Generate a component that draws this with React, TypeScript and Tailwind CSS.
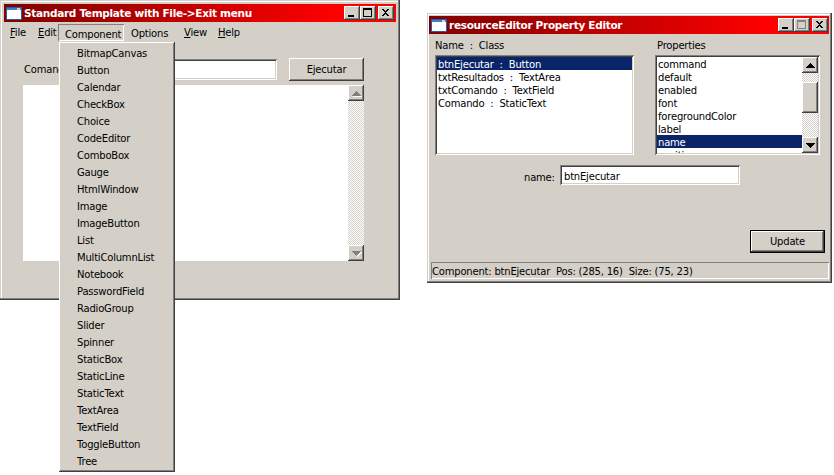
const raised = "shadow-[inset_-1px_-1px_0_#404040,inset_1px_1px_0_#fff,inset_-2px_-2px_0_#808080]";
const sunken = "shadow-[inset_1px_1px_0_#808080,inset_-1px_-1px_0_#fff,inset_2px_2px_0_#404040,inset_-2px_-2px_0_#d4d0c8]";
const dither = "bg-[repeating-conic-gradient(#d4d0c8_0%_25%,#ffffff_0%_50%)] bg-[length:2px_2px]";

function WinIcon() {
  return (
    <svg width="16" height="13" viewBox="0 0 16 13" shapeRendering="crispEdges" className="shrink-0">
      <rect x="0" y="0" width="16" height="13" fill="#2a5aa8" />
      <rect x="1" y="1" width="14" height="2" fill="#3a7fd0" />
      <rect x="11" y="1" width="3" height="2" fill="#d4d0c8" />
      <rect x="1" y="3" width="14" height="9" fill="#ffffff" />
    </svg>
  );
}

function Cap({ kind, disabled }: { kind: "min" | "max" | "close"; disabled?: boolean }) {
  const c = disabled ? "#808080" : "#000000";
  return (
    <div className={`w-4 h-[14px] bg-[#d4d0c8] ${raised}`}>
      <svg width="16" height="14" viewBox="0 0 16 14" shapeRendering="crispEdges">
        {kind === "min" && <rect x="4" y="9" width="6" height="2" fill={c} />}
        {kind === "max" && (
          <path d="M3 2h9v9H3z M4 4v6h7V4z" fillRule="evenodd" fill={c} />
        )}
        {kind === "close" && (
          <path
            d="M4 3h2v1h1v1h1V4h1V3h2v1h-1v1H9v1H8v1h1v1h1v1h1v1H9V9H8V8H7v1H6v1H4V9h1V8h1V7h1V6H6V5H5V4H4z"
            fill={c}
          />
        )}
      </svg>
    </div>
  );
}

function TitleBar({ title, maxDisabled, right }: { title: string; maxDisabled?: boolean; right: string }) {
  return (
    <div className={`h-[18px] shrink-0 flex items-center pl-[2px] ${right} bg-gradient-to-r from-[#800000] to-[#ff0000] to-[85%]`}>
      <WinIcon />
      <span className="ml-[2px] flex-1 h-[18px] text-white font-bold text-[10.5px] tracking-[-0.3px] leading-[19px] whitespace-nowrap">{title}</span>
      <Cap kind="min" />
      <Cap kind="max" disabled={maxDisabled} />
      <div className="w-[2px]" />
      <Cap kind="close" />
    </div>
  );
}

function ScrollBtn({ dir, disabled }: { dir: "up" | "down"; disabled?: boolean }) {
  const up = "M8 6h1v1h1v1h1v1h1v1h1v1H4v-1h1V9h1V8h1V7h1z";
  const down = "M4 6h9v1h-1v1h-1v1h-1v1H9v1H8v-1H7V9H6V8H5V7H4z";
  const d = dir === "up" ? up : down;
  return (
    <div className={`w-4 h-4 shrink-0 bg-[#d4d0c8] ${raised}`}>
      <svg width="16" height="16" viewBox="0 0 16 16" shapeRendering="crispEdges">
        {disabled && <path d={d} fill="#ffffff" transform="translate(1 1)" />}
        <path d={d} fill={disabled ? "#808080" : "#000000"} />
      </svg>
    </div>
  );
}

function ListBox({ rows, selected }: { rows: string[]; selected: number }) {
  return (
    <div className="flex-1 overflow-hidden">
      {rows.map((r, i) => (
        <div
          key={r}
          className={`h-[13px] leading-[15px] pl-[1px] whitespace-pre ${i === selected ? "bg-[#0a246a] text-white" : "text-black"}`}
        >
          {r}
        </div>
      ))}
    </div>
  );
}

const menuItems = [
  "BitmapCanvas", "Button", "Calendar", "CheckBox", "Choice", "CodeEditor", "ComboBox", "Gauge",
  "HtmlWindow", "Image", "ImageButton", "List", "MultiColumnList", "Notebook", "PasswordField",
  "RadioGroup", "Slider", "Spinner", "StaticBox", "StaticLine", "StaticText", "TextArea",
  "TextField", "ToggleButton", "Tree",
];

function TopMenu({ label, ul, className }: { label: string; ul: string; className: string }) {
  return (
    <div className={`h-[20px] leading-[22px] shrink-0 ${className}`}>
      <span className="underline">{ul}</span>
      {label}
    </div>
  );
}

export default function App() {
  return (
    <div className="w-[834px] h-[475px] bg-white flex items-start overflow-hidden text-[10px] tracking-[-0.2px] text-black font-['DejaVu_Sans',sans-serif]">
      {/* Left window */}
      <div className="relative w-[400px] h-[300px] shrink-0 flex flex-col p-[4px] bg-[#d4d0c8] shadow-[inset_-1px_-1px_0_#404040,inset_-2px_-2px_0_#808080,inset_1px_1px_0_#d4d0c8,inset_2px_2px_0_#ffffff]">
        <TitleBar title="Standard Template with File->Exit menu" right="pr-[2px]" />
        <div className="h-[20px] flex items-start shrink-0">
          <TopMenu ul="F" label="ile" className="ml-[6px] w-[28px]" />
          <TopMenu ul="E" label="dit" className="w-[20px]" />
          <div className="mt-[2px] w-[66px] h-[17px] pl-[7px] leading-[21px] shrink-0 shadow-[inset_1px_1px_0_#808080,inset_-1px_-1px_0_#ffffff]">Component</div>
          <div className="ml-[7px] w-[53px] h-[20px] leading-[23px] shrink-0">Options</div>
          <TopMenu ul="V" label="iew" className="w-[34px]" />
          <TopMenu ul="H" label="elp" className="w-[30px]" />
        </div>
        <div className="flex items-center ml-[20px] mr-[32px] mt-[16px] h-[23px]">
          <div className="w-[60px]">Comando</div>
          <div className={`flex-1 h-[21px] bg-white ${sunken}`} />
          <div className={`ml-[12px] w-[75px] h-[23px] flex items-center justify-center ${raised}`}>Ejecutar</div>
        </div>
        <div className="flex ml-[19px] mr-[32px] mt-[4px] h-[176px] bg-white">
          <div className="flex-1" />
          <div className="w-4 flex flex-col">
            <ScrollBtn dir="up" disabled />
            <div className={`flex-1 ${dither}`} />
            <ScrollBtn dir="down" disabled />
          </div>
        </div>
        {/* Open menu */}
        <div className={`absolute left-[59px] top-[42px] w-[116px] h-[430px] pt-[3px] pb-[1px] pl-[18px] bg-[#d4d0c8] ${raised}`}>
          {menuItems.map((m) => (
            <div key={m} className="h-[17px] leading-[17px] whitespace-nowrap">{m}</div>
          ))}
        </div>
      </div>

      {/* Right window */}
      <div className="ml-[27px] mt-[13px] w-[405px] h-[270px] shrink-0 flex flex-col pt-[3px] pl-[2px] pr-[3px] pb-[4px] bg-[#d4d0c8] shadow-[inset_-1px_-1px_0_#404040,inset_-2px_-2px_0_#808080,inset_1px_1px_0_#d4d0c8,inset_2px_2px_0_#ffffff]">
        <TitleBar title="resourceEditor Property Editor" maxDisabled right="pr-[1px]" />
        <div className="flex mt-[2px] ml-[6px] h-[120px] shrink-0">
          <div className="w-[199px] flex flex-col">
            <div className="h-[18px] leading-[20px] whitespace-pre">Name  :  Class</div>
            <div className={`h-[100px] mt-[1px] p-[2px] flex bg-white ${sunken}`}>
              <ListBox
                selected={0}
                rows={["btnEjecutar  :  Button", "txtResultados  :  TextArea", "txtComando  :  TextField", "Comando  :  StaticText"]}
              />
            </div>
          </div>
          <div className="ml-[21px] w-[165px] flex flex-col">
            <div className="h-[18px] leading-[20px] pl-[2px]">Properties</div>
            <div className={`h-[100px] mt-[1px] p-[2px] flex bg-white ${sunken}`}>
              <ListBox
                selected={6}
                rows={["command", "default", "enabled", "font", "foregroundColor", "label", "name", "position"]}
              />
              <div className="w-4 flex flex-col">
                <ScrollBtn dir="up" />
                <div className={`h-[9px] ${dither}`} />
                <div className={`h-[31px] bg-[#d4d0c8] ${raised}`} />
                <div className={`flex-1 ${dither}`} />
                <ScrollBtn dir="down" />
              </div>
            </div>
          </div>
        </div>
        <div className="flex items-center mt-[9px] h-[20px] shrink-0">
          <div className="ml-[95px] w-[36px] pt-[5px]">name:</div>
          <div className={`w-[180px] h-[20px] pl-[4px] leading-[23px] bg-white ${sunken}`}>btnEjecutar</div>
        </div>
        <div className="flex justify-end mt-[45px] mr-[4px] shrink-0">
          <div className="w-[75px] h-[23px] flex items-center justify-center bg-black p-[1px]">
            <div className={`w-full h-full flex items-center justify-center bg-[#d4d0c8] ${raised}`}>Update</div>
          </div>
        </div>
        <div className="ml-[2px] mt-[9px] h-[17px] leading-[20px] pl-[1px] whitespace-pre shrink-0 shadow-[inset_1px_1px_0_#808080,inset_-1px_-1px_0_#ffffff]">Component: btnEjecutar  Pos: (285, 16)  Size: (75, 23)</div>
      </div>
    </div>
  );
}
